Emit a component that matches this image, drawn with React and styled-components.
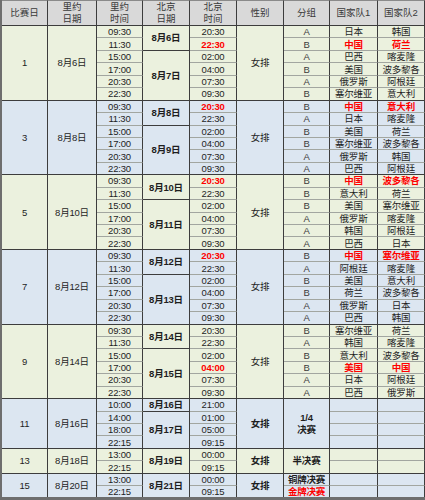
import React from 'react';
import styled, { createGlobalStyle, css } from 'styled-components';

const GlobalStyle = createGlobalStyle`
  body {
    margin: 0;
    background: #ffffff;
  }
`;

const headers = [
  ['比赛日'],
  ['里约', '日期'],
  ['里约', '时间'],
  ['北京', '日期'],
  ['北京', '时间'],
  ['性别'],
  ['分组'],
  ['国家队1'],
  ['国家队2'],
];

const widths = [46, 49, 46, 47, 47, 47, 46, 48, 47];

// r: 北京时间 and both teams shown in red
const groups = [
  {
    day: '1', rio: '8月6日', tone: 'green',
    dates: { 0: ['8月6日', 2], 2: ['8月7日', 4] },
    rows: [
      { rt: '09:30', bt: '20:30', g: 'A', t1: '日本', t2: '韩国' },
      { rt: '11:30', bt: '22:30', g: 'B', t1: '中国', t2: '荷兰', r: true },
      { rt: '15:00', bt: '02:00', g: 'A', t1: '巴西', t2: '喀麦隆' },
      { rt: '17:00', bt: '04:00', g: 'B', t1: '美国', t2: '波多黎各' },
      { rt: '20:30', bt: '07:30', g: 'A', t1: '俄罗斯', t2: '阿根廷' },
      { rt: '22:30', bt: '09:30', g: 'B', t1: '塞尔维亚', t2: '意大利' },
    ],
  },
  {
    day: '3', rio: '8月8日', tone: 'blue',
    dates: { 0: ['8月8日', 2], 2: ['8月9日', 4] },
    rows: [
      { rt: '09:30', bt: '20:30', g: 'B', t1: '中国', t2: '意大利', r: true },
      { rt: '11:30', bt: '22:30', g: 'A', t1: '日本', t2: '喀麦隆' },
      { rt: '15:00', bt: '02:00', g: 'B', t1: '美国', t2: '荷兰' },
      { rt: '17:00', bt: '04:00', g: 'B', t1: '塞尔维亚', t2: '波多黎各' },
      { rt: '20:30', bt: '07:30', g: 'A', t1: '俄罗斯', t2: '韩国' },
      { rt: '22:30', bt: '09:30', g: 'A', t1: '巴西', t2: '阿根廷' },
    ],
  },
  {
    day: '5', rio: '8月10日', tone: 'green',
    dates: { 0: ['8月10日', 2], 2: ['8月11日', 4] },
    rows: [
      { rt: '09:30', bt: '20:30', g: 'B', t1: '中国', t2: '波多黎各', r: true },
      { rt: '11:30', bt: '22:30', g: 'B', t1: '意大利', t2: '荷兰' },
      { rt: '15:00', bt: '02:00', g: 'B', t1: '美国', t2: '塞尔维亚' },
      { rt: '17:00', bt: '04:00', g: 'A', t1: '俄罗斯', t2: '喀麦隆' },
      { rt: '20:30', bt: '07:30', g: 'A', t1: '韩国', t2: '阿根廷' },
      { rt: '22:30', bt: '09:30', g: 'A', t1: '巴西', t2: '日本' },
    ],
  },
  {
    day: '7', rio: '8月12日', tone: 'blue',
    dates: { 0: ['8月12日', 2], 2: ['8月13日', 4] },
    rows: [
      { rt: '09:30', bt: '20:30', g: 'B', t1: '中国', t2: '塞尔维亚', r: true },
      { rt: '11:30', bt: '22:30', g: 'A', t1: '阿根廷', t2: '喀麦隆' },
      { rt: '15:00', bt: '02:00', g: 'B', t1: '美国', t2: '意大利' },
      { rt: '17:00', bt: '04:00', g: 'B', t1: '荷兰', t2: '波多黎各' },
      { rt: '20:30', bt: '07:30', g: 'A', t1: '俄罗斯', t2: '日本' },
      { rt: '22:30', bt: '09:30', g: 'A', t1: '巴西', t2: '韩国' },
    ],
  },
  {
    day: '9', rio: '8月14日', tone: 'green',
    dates: { 0: ['8月14日', 2], 2: ['8月15日', 4] },
    rows: [
      { rt: '09:30', bt: '20:30', g: 'B', t1: '塞尔维亚', t2: '荷兰' },
      { rt: '11:30', bt: '22:30', g: 'A', t1: '韩国', t2: '喀麦隆' },
      { rt: '15:00', bt: '02:00', g: 'B', t1: '意大利', t2: '波多黎各' },
      { rt: '17:00', bt: '04:00', g: 'B', t1: '美国', t2: '中国', r: true },
      { rt: '20:30', bt: '07:30', g: 'A', t1: '日本', t2: '阿根廷' },
      { rt: '22:30', bt: '09:30', g: 'A', t1: '巴西', t2: '俄罗斯' },
    ],
  },
  {
    day: '11', rio: '8月16日', tone: 'blue', final: true,
    dates: { 0: ['8月16日', 1], 1: ['8月17日', 3] },
    stage: ['1/4', '决赛'],
    rows: [
      { rt: '10:00', bt: '21:00' },
      { rt: '14:00', bt: '01:00' },
      { rt: '18:00', bt: '05:00' },
      { rt: '22:15', bt: '09:15' },
    ],
  },
  {
    day: '13', rio: '8月18日', tone: 'green', final: true,
    dates: { 0: ['8月19日', 2] },
    stage: ['半决赛'],
    rows: [
      { rt: '13:00', bt: '00:00' },
      { rt: '22:15', bt: '09:15' },
    ],
  },
  {
    day: '15', rio: '8月20日', tone: 'blue', final: true,
    dates: { 0: ['8月21日', 2] },
    rows: [
      { rt: '13:00', bt: '00:00', s: '铜牌决赛' },
      { rt: '22:15', bt: '09:15', s: '金牌决赛', sr: true },
    ],
  },
];

function App() {
  return (
    <>
      <GlobalStyle />
      <Frame>
        <Sheet>
          <colgroup>
            {widths.map((w, i) => (
              <Col key={i} $w={w} />
            ))}
          </colgroup>
          <thead>
            <HeadRow>
              {headers.map((h, i) => (
                <HeadCell key={i}>
                  {h.map((line, j) => (
                    <HeadLine key={j}>{line}</HeadLine>
                  ))}
                </HeadCell>
              ))}
            </HeadRow>
          </thead>
          {groups.map((grp) => {
            const n = grp.rows.length;
            return (
              <Group key={grp.day} $tone={grp.tone}>
                {grp.rows.map((row, i) => (
                  <Row key={i} $end={i === n - 1}>
                    {i === 0 && <Cell rowSpan={n}>{grp.day}</Cell>}
                    {i === 0 && <Cell rowSpan={n}>{grp.rio}</Cell>}
                    <Cell $soft>{row.rt}</Cell>
                    {grp.dates[i] && (
                      <Cell rowSpan={grp.dates[i][1]} $bold>
                        {grp.dates[i][0]}
                      </Cell>
                    )}
                    <Cell $soft $red={row.r}>{row.bt}</Cell>
                    {i === 0 && (
                      <Cell rowSpan={n} $bold={grp.final}>女排</Cell>
                    )}
                    {grp.stage
                      ? i === 0 && (
                          <Cell rowSpan={n} $bold>
                            {grp.stage.map((line, j) => (
                              <HeadLine key={j}>{line}</HeadLine>
                            ))}
                          </Cell>
                        )
                      : row.s
                        ? <Cell $soft $bold $red={row.sr}>{row.s}</Cell>
                        : <Cell $soft $muted>{row.g}</Cell>}
                    <Cell $soft $red={row.r}>{row.t1 || ''}</Cell>
                    <Cell $soft $red={row.r}>{row.t2 || ''}</Cell>
                  </Row>
                ))}
              </Group>
            );
          })}
        </Sheet>
      </Frame>
    </>
  );
}

const Frame = styled.div`
  width: 425px;
  height: 500px;
  box-sizing: border-box;
  border-left: 2px solid #6e6e6e;
  border-bottom: 3px solid #6e6e6e;
  overflow: hidden;
  background: #ffffff;
`;

const Sheet = styled.table`
  width: 423px;
  table-layout: fixed;
  border-collapse: separate;
  border-spacing: 0;
  font-family: "Liberation Sans", "Noto Sans CJK SC", sans-serif;
  font-size: 9.5px;
  color: #1e1e1e;
`;

const Col = styled.col`
  width: ${(p) => p.$w}px;
`;

const HeadRow = styled.tr`
  height: 26px;
  background: #d9d9d9;
`;

const HeadCell = styled.th`
  padding: 0;
  font-weight: 400;
  color: #3a3a3a;
  text-align: center;
  vertical-align: middle;
  border-top: 1px solid #8a8a8a;
  border-right: 1px solid #3d3d3d;
  border-bottom: 1px solid #3d3d3d;
`;

const HeadLine = styled.div`
  line-height: 12px;
`;

const Group = styled.tbody`
  background: ${(p) => (p.$tone === 'blue' ? '#dce6f1' : '#ebf1de')};
`;

const Row = styled.tr`
  height: 12.45px;
  ${(p) =>
    p.$end &&
    css`
      & > td {
        border-bottom-color: #3d3d3d;
      }
    `}
`;

const Cell = styled.td`
  padding: 0;
  text-align: center;
  vertical-align: middle;
  line-height: 11px;
  white-space: nowrap;
  overflow: hidden;
  letter-spacing: -0.2px;
  border-right: 1px solid #3d3d3d;
  border-bottom: 1px solid ${(p) => (p.$soft ? '#a2a6a0' : '#3d3d3d')};
  font-weight: ${(p) => (p.$bold || p.$red ? 700 : 400)};
  color: ${(p) => (p.$red ? '#ff0000' : p.$muted ? '#3c3c3c' : '#1e1e1e')};
`;

export default App;
